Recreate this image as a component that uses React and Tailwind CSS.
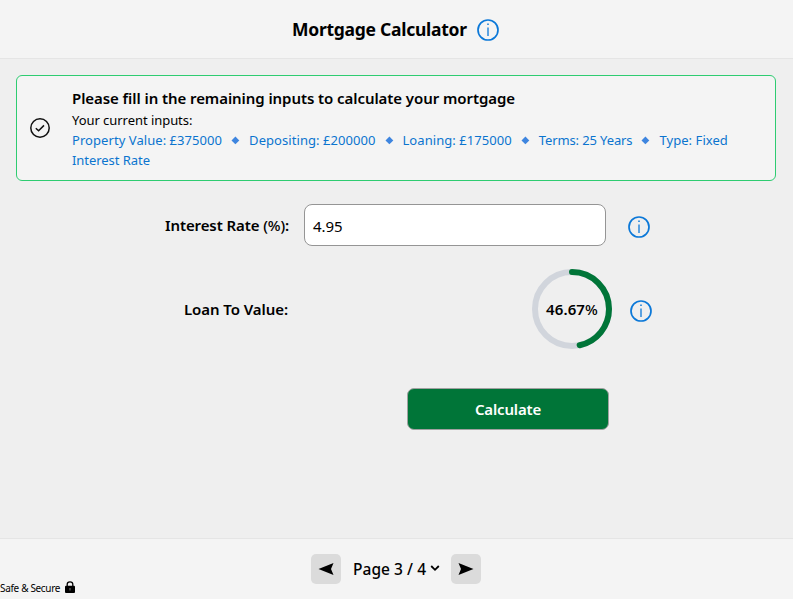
import React from "react";

function InfoIcon() {
  return (
    <svg className="block size-[22px] shrink-0" viewBox="0 0 22 22" fill="none" stroke="#0b78d8">
      <circle cx="11" cy="11" r="10" strokeWidth="1.7" />
      <path d="M11 8.6V17" strokeWidth="1.3" />
      <path d="M11 4.4V6" strokeWidth="1.5" />
    </svg>
  );
}

function Diamond() {
  return (
    <svg className="mx-[9px] inline-block h-[9px] w-[9px] align-[0px]" viewBox="0 0 9 9">
      <path d="M4.4 .5 8.3 4.4 4.4 8.3 .5 4.4Z" fill="#3e85df" />
    </svg>
  );
}

export default function App() {
  return (
    <div className="flex h-[599px] w-[793px] flex-col overflow-hidden bg-[#efefef] font-['Noto_Sans','Open_Sans',sans-serif] text-black">
      <header className="flex h-[59px] shrink-0 items-center border-b border-[#e5e5e5] bg-[#f4f4f4] pl-[292px]">
        <h1 className="w-[184.5px] text-[17.5px] leading-[24px] font-bold tracking-[-0.27px] whitespace-nowrap">Mortgage Calculator</h1>
        <div className="pt-[2px]"><InfoIcon /></div>
      </header>

      <main className="flex flex-1 flex-col">
        <section className="mx-4 mt-4 flex h-[106px] w-[760px] items-center rounded-[6px] border border-[#2ecc71] bg-[#f4f4f4] pl-[13px]">
          <svg className="size-5 shrink-0" viewBox="0 0 20 20" fill="none" stroke="#111" strokeWidth="1.5">
            <circle cx="10" cy="10" r="9.2" />
            <path d="m5.8 10.2 2.8 2.6 5.4-5.4" />
          </svg>
          <div className="pl-[22px] text-[13px] leading-5 whitespace-nowrap">
            <h2 className="pt-px text-[15px] leading-[23px] font-semibold tracking-[-0.07px]">Please fill in the remaining inputs to calculate your mortgage</h2>
            <p className="tracking-[-0.05px]">Your current inputs:</p>
            <p className="tracking-[0.06px] text-[#0b74cf]">
              Property Value: £375000<Diamond />Depositing: £200000<Diamond />Loaning: £175000<Diamond /><span className="tracking-[-0.12px]">Terms: 25 Years</span><Diamond /><span>Type: Fixed</span>
              <br />
              <span className="tracking-[-0.05px]">Interest Rate</span>
            </p>
          </div>
        </section>

        <div className="mt-[23px] flex h-[42px] items-center pl-[165px]">
          <label className="w-[139px] pt-px text-[15px] font-semibold tracking-[-0.1px] whitespace-nowrap">Interest Rate <span className="font-medium">(%)</span>:</label>
          <div className="flex h-[42px] w-[302px] items-center rounded-[8px] border border-[#959595] bg-white pt-[3px] pl-2 text-[15px] tracking-[-0.1px]">4.95</div>
          <div className="pt-[3px] pl-[22px]"><InfoIcon /></div>
        </div>

        <div className="mt-[23px] flex h-20 items-center pl-[184px]">
          <span className="w-[348px] text-[15px] font-semibold tracking-[-0.07px] whitespace-nowrap">Loan To Value:</span>
          <div className="grid size-20 place-items-center">
            <svg className="col-start-1 row-start-1 size-20" viewBox="0 0 80 80" fill="none" strokeWidth="6">
              <circle cx="40" cy="40" r="37" stroke="#d1d5dc" />
              <circle cx="40" cy="40" r="37" stroke="#007538" strokeLinecap="round" pathLength="100" strokeDasharray="46.67 100" transform="rotate(-90 40 40)" />
            </svg>
            <span className="col-start-1 row-start-1 text-[15px] font-semibold tracking-[0.1px]">46.67<span className="font-medium">%</span></span>
          </div>
          <div className="pt-[3px] pl-[18px]"><InfoIcon /></div>
        </div>

        <button className="mt-[39px] ml-[407px] h-[42px] w-[202px] rounded-[7px] border border-[#a1a1a1] bg-[#007538] text-[15px] font-semibold tracking-[-0.15px] text-white">Calculate</button>
      </main>

      <footer className="flex h-[61px] shrink-0 items-center border-t border-[#e5e5e5] bg-[#f4f4f4]">
        <div className="flex w-[311px] items-center gap-[5px] self-end pb-[4px]">
          <span className="text-[10px] leading-[14px] tracking-[-0.33px] whitespace-nowrap">Safe &amp; Secure</span>
          <svg className="mb-[2px] h-3 w-[10px]" viewBox="0 0 10 12">
            <path d="M2.2 5V3.3a2.8 2.5 0 0 1 5.6 0V5" fill="none" stroke="#000" strokeWidth="1.3" />
            <rect y="4.7" width="10" height="7.3" rx="1" />
            <path d="M5 7v2.5" stroke="#777" />
          </svg>
        </div>
        <button className="flex size-[30px] items-center justify-center rounded-[5px] bg-[#dbdbdb]">
          <svg className="mb-px h-3 w-4" viewBox="0 0 16 12"><path d="M.5 6 15.5 0 13 6l2.5 6Z" /></svg>
        </button>
        <div className="flex w-[110px] items-center pl-[12px]">
          <span className="w-[77px] pt-px text-[15.5px] font-medium tracking-[0.05px] whitespace-nowrap">Page 3 / 4</span>
          <svg className="mb-[2px] h-[7px] w-[10px]" viewBox="0 0 9 7" fill="none" stroke="#000" strokeWidth="1.8"><path d="m.7 1 3.8 3.8L8.3 1" /></svg>
        </div>
        <button className="flex size-[30px] items-center justify-center rounded-[5px] bg-[#dbdbdb]">
          <svg className="h-3 w-4" viewBox="0 0 16 12"><path d="M15.5 6 .5 0 3 6 .5 12Z" /></svg>
        </button>
      </footer>
    </div>
  );
}
